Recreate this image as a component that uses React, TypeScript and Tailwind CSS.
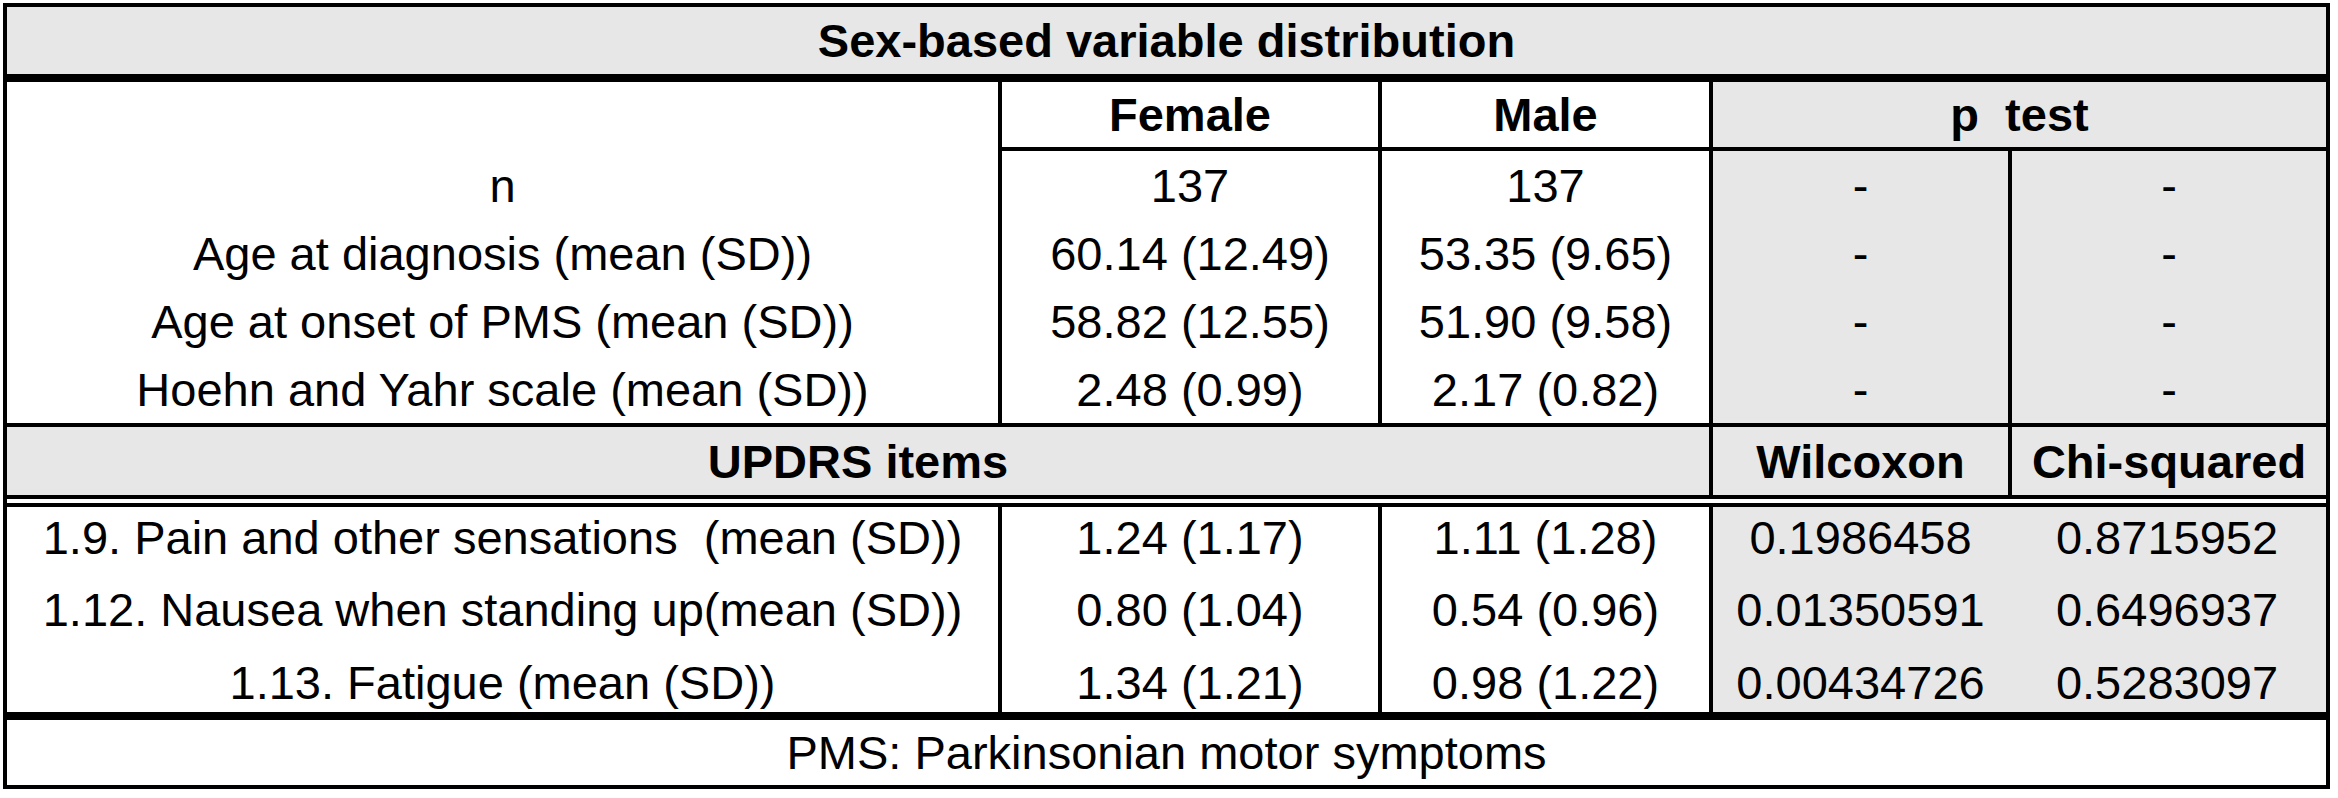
const topRows = [
  { label: "n", female: "137", male: "137" },
  { label: "Age at diagnosis (mean (SD))", female: "60.14 (12.49)", male: "53.35 (9.65)" },
  { label: "Age at onset of PMS (mean (SD))", female: "58.82 (12.55)", male: "51.90 (9.58)" },
  { label: "Hoehn and Yahr scale (mean (SD))", female: "2.48 (0.99)", male: "2.17 (0.82)" },
];

// row heights + padding nudge the text the way the source table sits
const updrsRows = [
  {
    label: "1.9. Pain and other sensations\u00a0 (mean (SD))",
    female: "1.24 (1.17)",
    male: "1.11 (1.28)",
    wilcoxon: "0.1986458",
    chi: "0.8715952",
    h: "h-[68px] pb-[8px]",
  },
  {
    label: "1.12. Nausea when standing up(mean (SD))",
    female: "0.80 (1.04)",
    male: "0.54 (0.96)",
    wilcoxon: "0.01350591",
    chi: "0.6496937",
    h: "h-[68px]",
  },
  {
    label: "1.13. Fatigue (mean (SD))",
    female: "1.34 (1.21)",
    male: "0.98 (1.22)",
    wilcoxon: "0.00434726",
    chi: "0.5283097",
    h: "h-[69px] pt-[10px]",
  },
];

const grid = "grid grid-cols-[991px_380px_331px_299px_318px]";
const cell = "flex items-center justify-center whitespace-nowrap";

export default function App() {
  return (
    <div className="min-h-screen bg-white pl-[3px] pt-[3px] font-['Liberation_Sans',Arial,sans-serif] text-[47px] leading-none text-black">
      <div className="w-[2327px] border-4 border-black">
        {/* Title */}
        <div className={`${cell} h-[75px] border-b-8 border-black bg-[#e7e7e7] font-bold`}>
          Sex-based variable distribution
        </div>

        {/* Column headers */}
        <div className={grid}>
          <div className="h-[69px] bg-white" />
          <div className={`${cell} h-[69px] border-b-4 border-l-4 border-black font-bold`}>Female</div>
          <div className={`${cell} h-[69px] border-b-4 border-l-4 border-black font-bold`}>Male</div>
          <div className={`${cell} col-span-2 h-[69px] border-b-4 border-l-4 border-black bg-[#e7e7e7] font-bold`}>
            p&nbsp; test
          </div>
        </div>

        {/* Demographics */}
        <div className={`${grid} border-b-4 border-black`}>
          {topRows.map((r) => (
            <div key={r.label} className="contents">
              <div className={`${cell} h-[68px]`}>{r.label}</div>
              <div className={`${cell} h-[68px] border-l-4 border-black`}>{r.female}</div>
              <div className={`${cell} h-[68px] border-l-4 border-black`}>{r.male}</div>
              <div className={`${cell} h-[68px] border-l-4 border-black bg-[#e7e7e7]`}>-</div>
              <div className={`${cell} h-[68px] border-l-4 border-black bg-[#e7e7e7]`}>-</div>
            </div>
          ))}
        </div>

        {/* UPDRS header */}
        <div className={`${grid} bg-[#e7e7e7]`}>
          <div className={`${cell} col-span-3 h-[68px] font-bold`}>UPDRS items</div>
          <div className={`${cell} h-[68px] border-l-4 border-black font-bold`}>Wilcoxon</div>
          <div className={`${cell} h-[68px] border-l-4 border-black font-bold`}>Chi-squared</div>
        </div>
        <div className="h-[12px] border-y-4 border-black bg-white" />

        {/* UPDRS rows */}
        <div className={`${grid} border-b-8 border-black`}>
          {updrsRows.map((r) => (
            <div key={r.label} className="contents">
              <div className={`${cell} ${r.h}`}>{r.label}</div>
              <div className={`${cell} ${r.h} border-l-4 border-black`}>{r.female}</div>
              <div className={`${cell} ${r.h} border-l-4 border-black`}>{r.male}</div>
              <div className={`${cell} ${r.h} border-l-4 border-black bg-[#e7e7e7]`}>{r.wilcoxon}</div>
              <div className={`${cell} ${r.h} bg-[#e7e7e7]`}>{r.chi}</div>
            </div>
          ))}
        </div>

        {/* Footnote */}
        <div className={`${cell} h-[65px]`}>PMS: Parkinsonian motor symptoms</div>
      </div>
    </div>
  );
}
